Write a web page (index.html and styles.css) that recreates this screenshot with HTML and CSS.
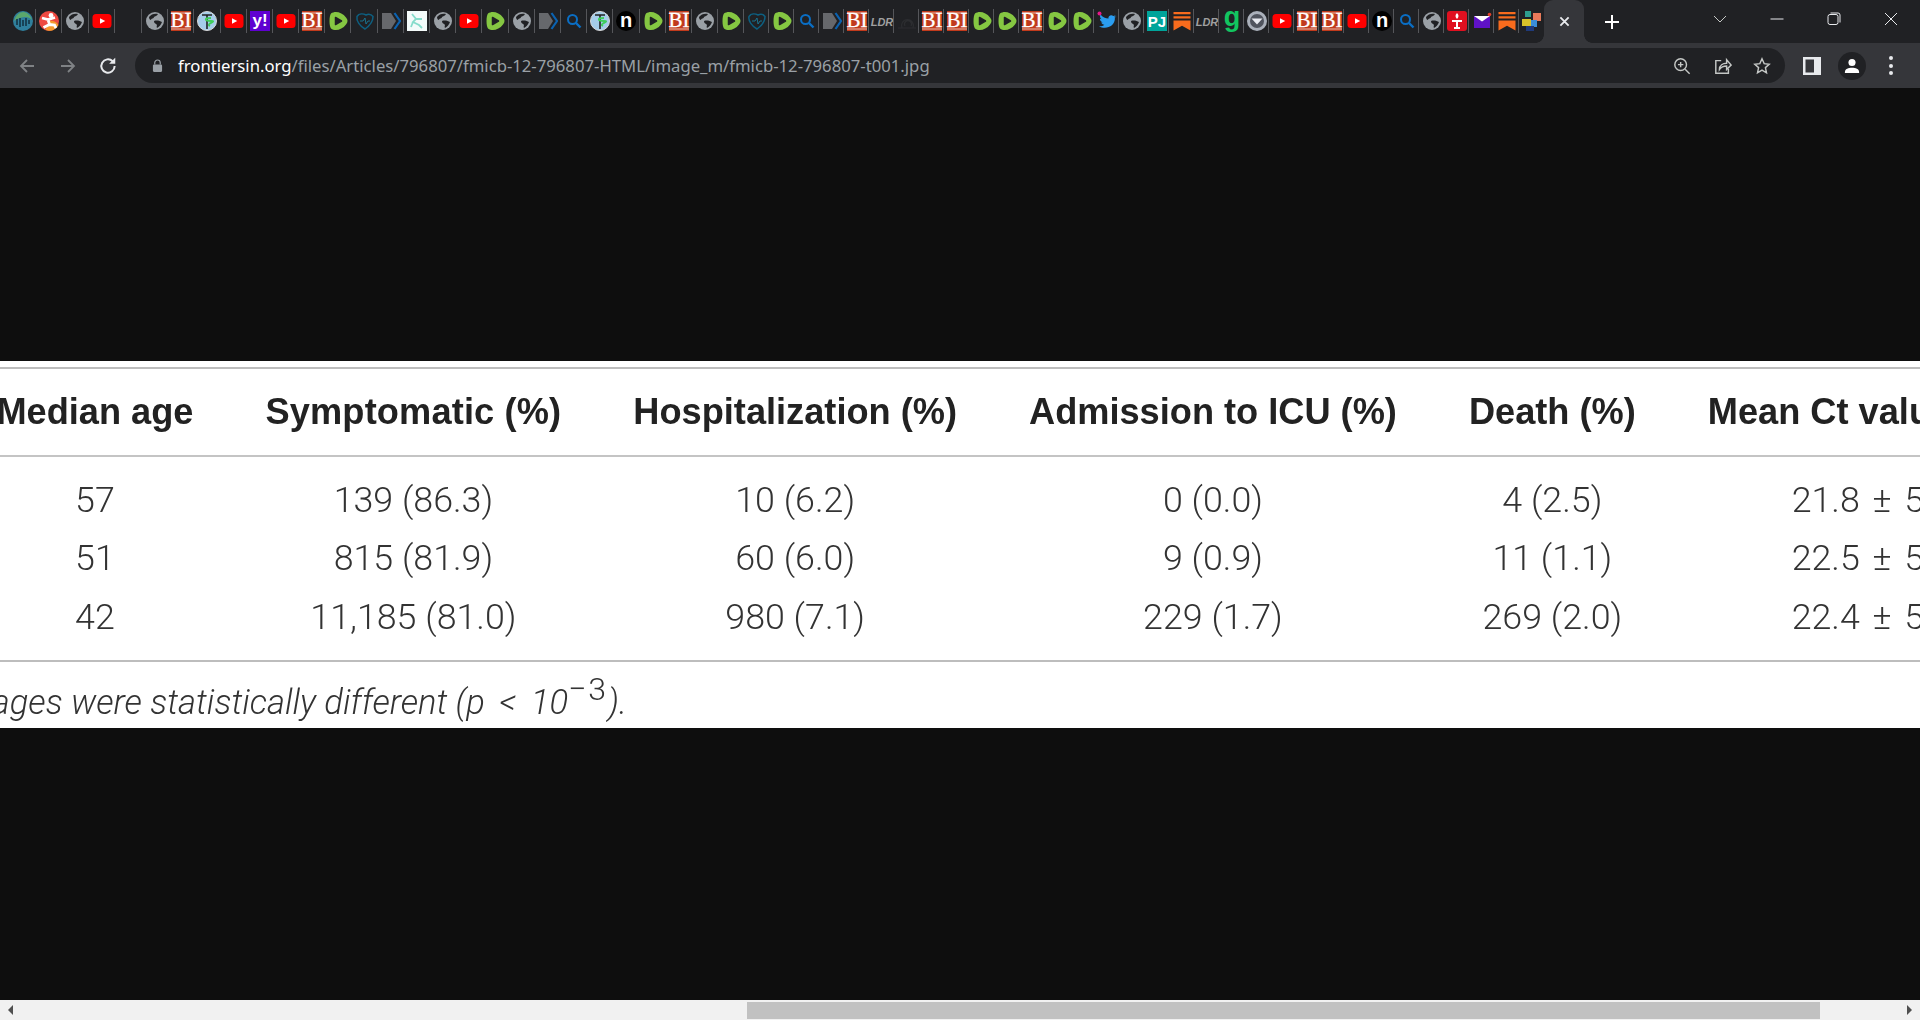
FILE: index.html
```html
<!DOCTYPE html>
<html lang="en">
<head>
<meta charset="utf-8">
<title>fmicb-12-796807-t001.jpg</title>
<link rel="stylesheet" href="styles.css">
</head>
<body>
<svg class="sprite" width="0" height="0" aria-hidden="true">
  <symbol id="globe" viewBox="0 0 20 20"><circle cx="10" cy="10" r="9" fill="#9aa0a6"/><path d="M4 6c2-3 6-4 9-3-1 2-3 2-4 3 0 2-3 1-3 3-1 0-2-1-2-3zM9 10c3-1 6 0 8 1-1 3-3 5-5 6-1-2 1-3-1-4-1-1-2-1-2-3z" fill="#202124"/></symbol>
  <symbol id="earth" viewBox="0 0 20 20"><circle cx="10" cy="10" r="10" fill="#2f7f9c"/><path d="M1 10C3 4 6 1 11 1c4 1 7 4 8 8-3-3-5-3-7-3-3 0-7 1-11 4z" fill="#5aa76c"/><path d="M4 8v6M7 7v9M10 9v6M13 7v8M16 9v4" stroke="#12303f" stroke-width="1.500"/></symbol>
  <symbol id="runner" viewBox="0 0 20 20"><circle cx="10" cy="10" r="10" fill="#ee4a42"/><path d="M10 10a10 10 0 0 1 9.500 4 10 10 0 0 1-13 5z" fill="#f59a2e"/><circle cx="12" cy="4.500" r="2.400" fill="#fff"/><path d="M3 7l6 1.500 7-2M9 8.500l1.500 5-6 3M10.500 13.500l5 .5 1.500 3" stroke="#fff" stroke-width="2.800" fill="none"/></symbol>
  <symbol id="yt" viewBox="0 0 20 20"><rect x="0.500" y="3" width="19" height="14" rx="3.500" fill="#f00"/><path d="M8 7.200l5.200 2.800L8 12.800z" fill="#fff"/></symbol>
  <symbol id="bi" viewBox="0 0 20 20"><rect width="20" height="20" fill="#c13a1c"/><rect y="1.500" width="20" height="1" fill="#e8b8a8"/><rect y="17.500" width="20" height="1" fill="#e8b8a8"/></symbol>
  <symbol id="cad" viewBox="0 0 20 20"><circle cx="10" cy="10" r="9.500" fill="#a5cdea" stroke="#d8d8d8" stroke-width="1"/><path d="M5 4h10M10 4v14" stroke="#222" stroke-width="1.600"/><path d="M14 7c-7 0-7 3 0 3s-6 3-1 5" stroke="#3ecf5a" stroke-width="1.800" fill="none"/></symbol>
  <symbol id="yahoo" viewBox="0 0 20 20"><rect width="20" height="20" fill="#5f01d1"/></symbol>
  <symbol id="rumble" viewBox="0 0 20 20"><path d="M3 2.500C7-.5 14 1 18 6.500c2 2.500 2 4.500 0 7-4 5.500-11 7-15 4C1 15.500 1 4.500 3 2.500z" fill="#85c742"/><path d="M7.500 6.500l6 3.500-6 3.500z" fill="#202124" stroke="#202124" stroke-width="1.500" stroke-linejoin="round"/></symbol>
  <symbol id="heart" viewBox="0 0 20 20"><path d="M10 18C5 15 1 10 2 5.500 4 2.500 8 2.500 11 4c2-1 5-1 7 1.500 0 5-3 9-8 12.500z" fill="none" stroke="#0d5f80" stroke-width="1.500"/><path d="M5 10h3l2-3 1 6 2-3h2" fill="none" stroke="#1a7a9a" stroke-width=".9"/></symbol>
  <symbol id="chev" viewBox="0 0 20 20"><path d="M1 2h9l5 8-5 8H1z" fill="#66686c"/><path d="M13.500 2l5.500 8-5.500 8" fill="none" stroke="#0b62b0" stroke-width="2.200"/></symbol>
  <symbol id="mol" viewBox="0 0 20 20"><rect width="20" height="20" fill="#f4fbfa"/><path d="M5 3l4 5-3 3 6 3 3 3M9 8h6M6 11l-2 5" stroke="#86dccb" stroke-width="1.800" fill="none"/></symbol>
  <symbol id="search" viewBox="0 0 20 20"><circle cx="8.500" cy="8.500" r="4.500" fill="none" stroke="#0a6ec4" stroke-width="2"/><path d="M12 12l4.500 4.500" stroke="#0a6ec4" stroke-width="2.400"/></symbol>
  <symbol id="n" viewBox="0 0 20 20"><circle cx="10" cy="10" r="10" fill="#000"/></symbol>
  <symbol id="dark" viewBox="0 0 20 20"><path d="M1 17h18M5 17a6 6 0 1 1 11 0M8 15a3.500 3.500 0 1 1 6 0" stroke="#2c2d30" stroke-width="1.200" fill="none"/></symbol>
  <symbol id="tw" viewBox="0 0 20 20"><path d="M19 5.500c-.7.400-1.400.600-2 .7.700-.5 1.300-1.200 1.500-2-.7.400-1.500.7-2.200.9-1.800-2-5.500-.5-4.800 2.500C8.500 7.400 5.500 6 3.500 3.500c-1 1.700-.4 3.700 1 4.700-.6 0-1.100-.2-1.600-.4 0 1.700 1.200 3.100 2.800 3.500-.5.100-1 .1-1.500 0 .4 1.300 1.700 2.300 3.200 2.400-1.500 1.100-3.300 1.700-5.400 1.500 6 3.700 16.300 1 15.900-8.600.7-.4 1.200-1 1.600-1.600z" fill="#2a9df0"/><circle cx="2.500" cy="2.500" r="2" fill="#e8178a"/></symbol>
  <symbol id="pj" viewBox="0 0 20 20"><rect width="20" height="20" fill="#00a49a"/></symbol>
  <symbol id="sub" viewBox="0 0 20 20"><path d="M1.500 1h17v2.200h-17zM1.500 5.200h17v2.200h-17zM1.500 9.500h17V19.500L10 14.800 1.500 19.500z" fill="#f86b1d"/></symbol>
  <symbol id="seal" viewBox="0 0 20 20"><circle cx="10" cy="10" r="10" fill="#aab0ba"/><circle cx="10" cy="10" r="7" fill="#50545e"/><path d="M4.500 7.500h11l-5.500 6z" fill="#e8eaf0"/></symbol>
  <symbol id="torch" viewBox="0 0 20 20"><rect width="20" height="20" rx="3" fill="#e01020"/><path d="M10 2c2 2 2 4 0 6-2-2-2-4 0-6zM5 9h10v2H11v5h2v2H7v-2h2v-5H5z" fill="#fff"/></symbol>
  <symbol id="mail" viewBox="0 0 20 20"><path d="M2 5h16v12H2z" fill="#5f12c8"/><path d="M2 5l8 5.500L18 5z" fill="#fff"/><circle cx="17.500" cy="3.500" r="1.800" fill="#e0402a"/></symbol>
  <symbol id="colour" viewBox="0 0 20 20"><rect x="3" y="0" width="6" height="6" fill="#2e9e8e"/><rect x="11" y="2" width="8" height="8" fill="#e87a5a"/><rect x="0" y="8" width="9" height="7" fill="#d8c22a"/><rect x="9" y="9" width="6" height="7" fill="#3a8ed8"/><rect x="4" y="15" width="8" height="5" fill="#1f3a7a"/></symbol>
</svg>

<header class="strip">
  <div class="tabs">
    <div class="tab"><svg class="fav" viewBox="0 0 20 20"><use href="#earth"/></svg></div>
    <div class="tab"><svg class="fav" viewBox="0 0 20 20"><use href="#runner"/></svg></div>
    <div class="tab"><svg class="fav" viewBox="0 0 20 20"><use href="#globe"/></svg></div>
    <div class="tab"><svg class="fav" viewBox="0 0 20 20"><use href="#yt"/></svg></div>
    <div class="tab"></div>
    <div class="tab"><svg class="fav" viewBox="0 0 20 20"><use href="#globe"/></svg></div>
    <div class="tab"><svg class="fav" viewBox="0 0 20 20"><use href="#bi"/><text class="bi-t" x="10" y="16" text-anchor="middle">BI</text></svg></div>
    <div class="tab"><svg class="fav" viewBox="0 0 20 20"><use href="#cad"/></svg></div>
    <div class="tab"><svg class="fav" viewBox="0 0 20 20"><use href="#yt"/></svg></div>
    <div class="tab"><svg class="fav" viewBox="0 0 20 20"><use href="#yahoo"/><text class="y-t" x="10" y="15" text-anchor="middle">y!</text></svg></div>
    <div class="tab"><svg class="fav" viewBox="0 0 20 20"><use href="#yt"/></svg></div>
    <div class="tab"><svg class="fav" viewBox="0 0 20 20"><use href="#bi"/><text class="bi-t" x="10" y="16" text-anchor="middle">BI</text></svg></div>
    <div class="tab"><svg class="fav" viewBox="0 0 20 20"><use href="#rumble"/></svg></div>
    <div class="tab"><svg class="fav" viewBox="0 0 20 20"><use href="#heart"/></svg></div>
    <div class="tab"><svg class="fav" viewBox="0 0 20 20"><use href="#chev"/></svg></div>
    <div class="tab"><svg class="fav" viewBox="0 0 20 20"><use href="#mol"/></svg></div>
    <div class="tab"><svg class="fav" viewBox="0 0 20 20"><use href="#globe"/></svg></div>
    <div class="tab"><svg class="fav" viewBox="0 0 20 20"><use href="#yt"/></svg></div>
    <div class="tab"><svg class="fav" viewBox="0 0 20 20"><use href="#rumble"/></svg></div>
    <div class="tab"><svg class="fav" viewBox="0 0 20 20"><use href="#globe"/></svg></div>
    <div class="tab"><svg class="fav" viewBox="0 0 20 20"><use href="#chev"/></svg></div>
    <div class="tab"><svg class="fav" viewBox="0 0 20 20"><use href="#search"/></svg></div>
    <div class="tab"><svg class="fav" viewBox="0 0 20 20"><use href="#cad"/></svg></div>
    <div class="tab"><svg class="fav" viewBox="0 0 20 20"><use href="#n"/><text class="n-t" x="10" y="16" text-anchor="middle">n</text></svg></div>
    <div class="tab"><svg class="fav" viewBox="0 0 20 20"><use href="#rumble"/></svg></div>
    <div class="tab"><svg class="fav" viewBox="0 0 20 20"><use href="#bi"/><text class="bi-t" x="10" y="16" text-anchor="middle">BI</text></svg></div>
    <div class="tab"><svg class="fav" viewBox="0 0 20 20"><use href="#globe"/></svg></div>
    <div class="tab"><svg class="fav" viewBox="0 0 20 20"><use href="#rumble"/></svg></div>
    <div class="tab narrow"><svg class="fav" viewBox="0 0 20 20"><use href="#heart"/></svg></div>
    <div class="tab narrow"><svg class="fav" viewBox="0 0 20 20"><use href="#rumble"/></svg></div>
    <div class="tab narrow"><svg class="fav" viewBox="0 0 20 20"><use href="#search"/></svg></div>
    <div class="tab narrow"><svg class="fav" viewBox="0 0 20 20"><use href="#chev"/></svg></div>
    <div class="tab narrow"><svg class="fav" viewBox="0 0 20 20"><use href="#bi"/><text class="bi-t" x="10" y="16" text-anchor="middle">BI</text></svg></div>
    <div class="tab narrow"><svg class="fav" viewBox="0 0 20 20"><text class="lr-t" x="10" y="14.500" text-anchor="middle">LDR</text></svg></div>
    <div class="tab narrow"><svg class="fav" viewBox="0 0 20 20"><use href="#dark"/></svg></div>
    <div class="tab narrow"><svg class="fav" viewBox="0 0 20 20"><use href="#bi"/><text class="bi-t" x="10" y="16" text-anchor="middle">BI</text></svg></div>
    <div class="tab narrow"><svg class="fav" viewBox="0 0 20 20"><use href="#bi"/><text class="bi-t" x="10" y="16" text-anchor="middle">BI</text></svg></div>
    <div class="tab narrow"><svg class="fav" viewBox="0 0 20 20"><use href="#rumble"/></svg></div>
    <div class="tab narrow"><svg class="fav" viewBox="0 0 20 20"><use href="#rumble"/></svg></div>
    <div class="tab narrow"><svg class="fav" viewBox="0 0 20 20"><use href="#bi"/><text class="bi-t" x="10" y="16" text-anchor="middle">BI</text></svg></div>
    <div class="tab narrow"><svg class="fav" viewBox="0 0 20 20"><use href="#rumble"/></svg></div>
    <div class="tab narrow"><svg class="fav" viewBox="0 0 20 20"><use href="#rumble"/></svg></div>
    <div class="tab narrow"><svg class="fav" viewBox="0 0 20 20"><use href="#tw"/></svg></div>
    <div class="tab narrow"><svg class="fav" viewBox="0 0 20 20"><use href="#globe"/></svg></div>
    <div class="tab narrow"><svg class="fav" viewBox="0 0 20 20"><use href="#pj"/><text class="pj-t" x="10" y="15.500" text-anchor="middle">PJ</text></svg></div>
    <div class="tab narrow"><svg class="fav" viewBox="0 0 20 20"><use href="#sub"/></svg></div>
    <div class="tab narrow"><svg class="fav" viewBox="0 0 20 20"><text class="lr-t" x="10" y="14.500" text-anchor="middle">LDR</text></svg></div>
    <div class="tab narrow"><svg class="fav" viewBox="0 0 20 20"><text class="g-t" x="10" y="15" text-anchor="middle">g</text></svg></div>
    <div class="tab narrow"><svg class="fav" viewBox="0 0 20 20"><use href="#seal"/></svg></div>
    <div class="tab narrow"><svg class="fav" viewBox="0 0 20 20"><use href="#yt"/></svg></div>
    <div class="tab narrow"><svg class="fav" viewBox="0 0 20 20"><use href="#bi"/><text class="bi-t" x="10" y="16" text-anchor="middle">BI</text></svg></div>
    <div class="tab narrow"><svg class="fav" viewBox="0 0 20 20"><use href="#bi"/><text class="bi-t" x="10" y="16" text-anchor="middle">BI</text></svg></div>
    <div class="tab narrow"><svg class="fav" viewBox="0 0 20 20"><use href="#yt"/></svg></div>
    <div class="tab narrow"><svg class="fav" viewBox="0 0 20 20"><use href="#n"/><text class="n-t" x="10" y="16" text-anchor="middle">n</text></svg></div>
    <div class="tab narrow"><svg class="fav" viewBox="0 0 20 20"><use href="#search"/></svg></div>
    <div class="tab narrow"><svg class="fav" viewBox="0 0 20 20"><use href="#globe"/></svg></div>
    <div class="tab narrow"><svg class="fav" viewBox="0 0 20 20"><use href="#torch"/></svg></div>
    <div class="tab narrow"><svg class="fav" viewBox="0 0 20 20"><use href="#mail"/></svg></div>
    <div class="tab narrow"><svg class="fav" viewBox="0 0 20 20"><use href="#sub"/></svg></div>
    <div class="tab narrow last"><svg class="fav" viewBox="0 0 20 20"><use href="#colour"/></svg></div>
  </div>
  <div class="active-tab">
    <svg class="ico-close" viewBox="0 0 12 12"><path d="M1.500 1.500l9 9M10.500 1.500l-9 9"/></svg>
  </div>
  <svg class="ico-plus" viewBox="0 0 16 16"><path d="M8 1v14M1 8h14"/></svg>
  <div class="win">
    <svg class="win-chev" viewBox="0 0 14 8"><path d="M1 1l6 6 6-6"/></svg>
    <svg class="win-btn" viewBox="0 0 14 14"><path d="M0.500 7h13"/></svg>
    <svg class="win-btn" viewBox="0 0 14 14"><rect x="1" y="2.500" width="10" height="10" rx="2"/><path d="M3.500 1h7.500a2 2 0 0 1 2 2v7.500"/></svg>
    <svg class="win-btn" viewBox="0 0 14 14"><path d="M1 1l12 12M13 1L1 13"/></svg>
  </div>
</header>

<nav class="toolbar">
  <svg class="nav-ico dim" viewBox="0 0 18 18"><path d="M16 9H3M9 3L3 9l6 6"/></svg>
  <svg class="nav-ico dim" viewBox="0 0 18 18"><path d="M2 9h13M9 3l6 6-6 6"/></svg>
  <svg class="nav-ico reload" viewBox="0 0 18 18"><path d="M15 9a6 6 0 1 1-1.800-4.300"/><path class="fill" d="M15.500 1.500v5.500H10z"/></svg>
  <div class="omni">
    <svg class="lock" viewBox="0 0 12 14"><path d="M3 6V4a3 3 0 0 1 6 0v2" fill="none" stroke="#9aa0a6" stroke-width="1.300"/><rect x="1" y="6" width="10" height="8" rx="1.200" fill="#9aa0a6"/></svg>
    <div class="url"><span class="host">frontiersin.org</span>/files/Articles/796807/fmicb-12-796807-HTML/image_m/fmicb-12-796807-t001.jpg</div>
    <div class="omni-actions">
      <svg class="act" viewBox="0 0 20 20"><circle cx="8.500" cy="8.500" r="6.500"/><path d="M13.500 13.500l5 5M8.500 5.500v6M5.500 8.500h6"/></svg>
      <svg class="act" viewBox="0 0 20 20"><path d="M8 4H2v14h14v-5"/><path d="M6 14c0-5 4-7 8-7V3l5 6-5 5v-4c-3 0-6 1-8 4z"/></svg>
      <svg class="act" viewBox="0 0 20 20"><path d="M10 2l2.400 5.400 5.600.6-4.200 3.800 1.200 5.700-5-2.900-5 2.900 1.200-5.700L2 8l5.600-.6z"/></svg>
    </div>
  </div>
  <svg class="panel" viewBox="0 0 18 18"><path fill-rule="evenodd" d="M0 0h18v18H0zM2.500 2.500v13H11v-13z"/></svg>
  <div class="avatar"><svg viewBox="0 0 18 18"><circle cx="9" cy="5" r="4"/><path d="M1 16c0-4 4-5 8-5s8 1 8 5v1H1z"/></svg></div>
  <div class="dots"><i></i><i></i><i></i></div>
</nav>

<main class="viewport">
  <article class="sheet">
    <table class="data">
      <thead>
        <tr><th>Median age</th><th>Symptomatic (%)</th><th>Hospitalization (%)</th><th>Admission to ICU (%)</th><th>Death (%)</th><th>Mean Ct value ± SD</th></tr>
      </thead>
      <tbody>
        <tr><td>57</td><td>139 (86.3)</td><td>10 (6.2)</td><td>0 (0.0)</td><td>4 (2.5)</td><td>21.8 ± 5.6</td></tr>
        <tr><td>51</td><td>815 (81.9)</td><td>60 (6.0)</td><td>9 (0.9)</td><td>11 (1.1)</td><td>22.5 ± 5.7</td></tr>
        <tr><td>42</td><td>11,185 (81.0)</td><td>980 (7.1)</td><td>229 (1.7)</td><td>269 (2.0)</td><td>22.4 ± 5.6</td></tr>
      </tbody>
    </table>
    <p class="note"><span>Median ages were statistically different (p <span class="lt">&lt;</span> 10<sup>−3</sup>).</span></p>
  </article>
</main>

<footer class="hscroll">
  <span class="arrow left"></span>
  <div class="track"><div class="thumb"></div></div>
  <span class="arrow right"></span>
</footer>
</body>
</html>
```

FILE: styles.css
```css
* { box-sizing: border-box; }
html, body { margin: 0; height: 100%; }
body {
  width: 1920px;
  height: 1020px;
  overflow: hidden;
  display: flex;
  flex-direction: column;
  background: #0e0e0e;
  font-family: "Liberation Sans", Arial, sans-serif;
}
.sprite { display: block; width: 0; height: 0; overflow: hidden; position: absolute; }

/* tab strip */
.strip {
  height: 43px;
  flex: none;
  display: flex;
  align-items: stretch;
  background: #202124;
  padding-left: 10px;
}
.tabs { display: flex; width: 1534px; flex: none; }
.tab {
  width: 26.200px;
  flex: none;
  display: flex;
  align-items: center;
  justify-content: center;
  padding-bottom: 2px;
  position: relative;
}
.tab:nth-child(5) { width: 27.200px; }
.tab.narrow { width: 25px; }
.tab::after {
  content: "";
  position: absolute;
  right: 0;
  top: 9px;
  width: 1px;
  height: 24px;
  background: #55565a;
}
.tab.last::after { display: none; }
.fav { width: 20px; height: 20px; display: block; overflow: visible; }
.bi-t { font: 21px "Liberation Serif", serif; fill: #fff; stroke: #fff; stroke-width: .3px; }
.y-t { font: bold 17px "Liberation Sans", sans-serif; fill: #fff; }
.n-t { font: bold 20px "Liberation Sans", sans-serif; fill: #fff; }
.lr-t { font: italic bold 11px "Liberation Sans", sans-serif; fill: #a0a0a0; }
.pj-t { font: bold 15px "Liberation Sans", sans-serif; fill: #fff; }
.g-t { font: bold 27px "Liberation Sans", sans-serif; fill: #12c560; }

.active-tab {
  width: 40px;
  flex: none;
  position: relative;
  background: #35363a;
  border-radius: 9px 9px 0 0;
  display: flex;
  align-items: center;
  justify-content: center;
  padding-bottom: 1px;
}
.active-tab::before, .active-tab::after {
  content: "";
  position: absolute;
  bottom: 0;
  width: 8px;
  height: 8px;
}
.active-tab::before { left: -8px; background: radial-gradient(circle at 0 0, transparent 7.500px, #35363a 8px); }
.active-tab::after { right: -8px; background: radial-gradient(circle at 100% 0, transparent 7.500px, #35363a 8px); }
.ico-close { width: 11px; height: 11px; fill: none; stroke: #e8eaed; stroke-width: 2; }
.ico-plus { width: 16px; height: 16px; margin: 14px 0 0 20px; fill: none; stroke: #fff; stroke-width: 2; }
.win { margin-left: auto; display: flex; align-items: flex-start; padding-top: 12px; }
.win-chev { width: 14px; height: 8px; margin: 3px 43px 0 0; fill: none; stroke: #c4c7c5; stroke-width: 1; }
.win-btn { width: 14px; height: 14px; margin-right: 43px; fill: none; stroke: #e8eaed; stroke-width: 1; }
.win-btn:last-child { margin-right: 22px; }

/* toolbar */
.toolbar {
  height: 45px;
  flex: none;
  display: flex;
  align-items: center;
  background: #35363a;
  padding-left: 18px;
}
.nav-ico { width: 18px; height: 18px; margin-right: 23px; fill: none; stroke: #e8eaed; stroke-width: 1.800; flex: none; }
.nav-ico.dim { stroke: #7f8285; }
.nav-ico .fill { fill: #e8eaed; stroke: none; }
.nav-ico.reload { width: 20px; height: 20px; margin: 0 17px 0 -2px; }
.omni {
  width: 1650px;
  height: 35px;
  flex: none;
  display: flex;
  align-items: center;
  background: #202124;
  border-radius: 18px;
  padding-left: 17px;
}
.lock { width: 11px; height: 13px; flex: none; }
.url {
  margin-left: 15px;
  font: 16.700px "Noto Sans", "Open Sans", sans-serif;
  color: #9aa0a6;
  white-space: nowrap;
}
.host { color: #fff; }
.omni-actions { margin-left: auto; display: flex; gap: 21px; padding-right: 14px; }
.act { width: 18px; height: 18px; fill: none; stroke: #c4c7c5; stroke-width: 1.600; }
.act:first-child { margin-right: 2px; }
.panel { width: 18px; height: 18px; flex: none; margin-left: 18px; fill: #e8eaed; }
.avatar {
  width: 28px;
  height: 28px;
  flex: none;
  margin-left: 17px;
  border-radius: 50%;
  background: #202124;
  display: flex;
  align-items: center;
  justify-content: center;
}
.avatar svg { width: 16px; height: 16px; fill: #fff; }
.dots { margin-left: 23px; display: flex; flex-direction: column; gap: 3.500px; }
.dots i { display: block; width: 4px; height: 4px; border-radius: 50%; background: #e8eaed; }

/* image viewport */
.viewport {
  flex: 1;
  min-height: 0;
  display: flex;
  align-items: center;
  overflow: hidden;
  background: #0e0e0e;
}
.sheet {
  width: 100%;
  height: 367px;
  background: #fff;
  padding-top: 6px;
  overflow: hidden;
  color: #333;
  filter: blur(0.45px);
}
.data {
  border-collapse: collapse;
  margin-left: -39.600px;
  border-top: 2px solid #bdbdbd;
  border-bottom: 2px solid #bdbdbd;
  white-space: nowrap;
}
.data th {
  height: 88px;
  padding: 1px 36px 0;
  font: bold 36.200px "Liberation Sans", Arial, sans-serif;
  color: #222;
  border-bottom: 2px solid #c4c4c4;
}
.data th:nth-child(2) { letter-spacing: 0.150px; }
.data td {
  height: 59px;
  padding: 0 36px;
  text-align: center;
  font: 300 35.800px Roboto, "Liberation Sans", sans-serif;
  color: #333;
}
.data td:last-child { padding-right: 41px; word-spacing: 4px; }
.data tbody tr:first-child td { height: 73px; padding-top: 14px; }
.data tbody tr:last-child td { height: 73px; padding-bottom: 14px; }
.note {
  width: 627px;
  height: 64px;
  margin: 0;
  padding-top: 17px;
  display: flex;
  justify-content: flex-end;
  align-items: center;
  overflow: hidden;
  white-space: nowrap;
  font: italic 300 34.600px Roboto, "Liberation Sans", sans-serif;
  color: #333;
}
.note > span { flex: none; }
.lt { margin: 0 6px; }
.note sup { font-style: normal; font-size: 32px; letter-spacing: 2px; line-height: 0; vertical-align: 14px; }

/* horizontal scrollbar */
.hscroll {
  height: 20px;
  flex: none;
  display: flex;
  align-items: center;
  background: #f1f1f1;
}
.arrow { width: 0; height: 0; flex: none; border-top: 5px solid transparent; border-bottom: 5px solid transparent; }
.arrow.left { margin-left: 8px; border-right: 5px solid #505050; }
.arrow.right { margin-right: 8px; border-left: 5px solid #505050; }
.track { flex: 1; height: 17px; margin-top: 1px; padding-left: 734px; padding-right: 87px; }
.thumb { height: 100%; background: #c1c1c1; }
```
